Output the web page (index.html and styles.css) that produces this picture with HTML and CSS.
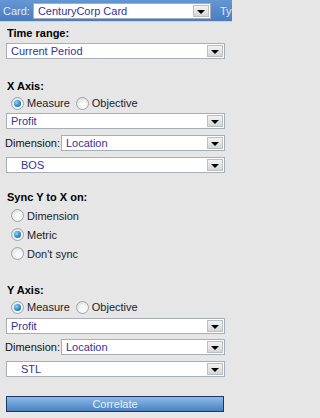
FILE: index.html
```html
<!DOCTYPE html>
<html>
<head>
<meta charset="utf-8">
<link rel="stylesheet" href="styles.css">
</head>
<body>
<div class="header">
  <span class="hlabel">Card:</span>
  <div class="select card-select"><span class="val">CenturyCorp Card</span><span class="btn"><i class="tri"></i></span></div>
  <span class="hlabel ty">Ty</span>
</div>
<div class="panel">
  <div class="label l-time">Time range:</div>
  <div class="select s-time"><span class="val">Current Period</span><span class="btn"><i class="tri"></i></span></div>

  <div class="label l-x">X Axis:</div>
  <div class="radios r-x">
    <span class="radio checked"></span><span class="rtext">Measure</span>
    <span class="radio"></span><span class="rtext">Objective</span>
  </div>
  <div class="select s-gap2"><span class="val">Profit</span><span class="btn"><i class="tri"></i></span></div>
  <div class="dimrow s-gap6">
    <span class="dimlabel">Dimension:</span>
    <div class="select grow"><span class="val">Location</span><span class="btn"><i class="tri"></i></span></div>
  </div>
  <div class="select s-gap6"><span class="val indent">BOS</span><span class="btn"><i class="tri"></i></span></div>

  <div class="label l-sync">Sync Y to X on:</div>
  <div class="syncs">
    <div class="srow"><span class="radio"></span><span class="rtext">Dimension</span></div>
    <div class="srow"><span class="radio checked"></span><span class="rtext">Metric</span></div>
    <div class="srow"><span class="radio"></span><span class="rtext">Don't sync</span></div>
  </div>

  <div class="label l-y">Y Axis:</div>
  <div class="radios r-y">
    <span class="radio checked"></span><span class="rtext">Measure</span>
    <span class="radio"></span><span class="rtext">Objective</span>
  </div>
  <div class="select s-gap3"><span class="val">Profit</span><span class="btn"><i class="tri"></i></span></div>
  <div class="dimrow s-gap5">
    <span class="dimlabel">Dimension:</span>
    <div class="select grow"><span class="val">Location</span><span class="btn"><i class="tri"></i></span></div>
  </div>
  <div class="select s-gap6"><span class="val indent">STL</span><span class="btn"><i class="tri"></i></span></div>

  <div class="button">Correlate</div>
</div>
</body>
</html>
```

FILE: styles.css
```css
html, body {
  margin: 0;
  padding: 0;
}
body {
  width: 232px;
  height: 418px;
  overflow: hidden;
  background: #e6e6e6;
  font-family: "Liberation Sans", Arial, sans-serif;
  font-size: 11px;
  color: #000;
}
.header {
  height: 22px;
  display: flex;
  align-items: center;
  background: linear-gradient(#6597d4, #4a7cc0);
  border-bottom: 1px solid #c9d3e2;
  box-sizing: border-box;
  padding-left: 3px;
  white-space: nowrap;
  overflow: hidden;
}
.hlabel {
  color: #dfe9f6;
  font-size: 11px;
  flex: none;
}
.card-select {
  width: 178px;
  margin-left: 3px;
  flex: none;
  border-color: #c2cad6;
}
.ty {
  margin-left: 9px;
}
.panel {
  display: flex;
  flex-direction: column;
  padding: 0 7px 0 6px;
}
.label {
  font-weight: bold;
  height: 14px;
  line-height: 14px;
  padding-left: 1px;
}
.l-time { margin-top: 4px; }
.l-x { margin-top: 20px; }
.l-sync { margin-top: 17px; }
.l-y { margin-top: 20px; }

.select {
  height: 16px;
  box-sizing: border-box;
  border: 1px solid #a7aeb8;
  background: #fff;
  display: flex;
  align-items: stretch;
  color: #33339a;
  font-size: 11px;
}
.select .val {
  flex: 1;
  line-height: 14px;
  padding-left: 4px;
  white-space: nowrap;
  overflow: hidden;
}
.select .val.indent {
  padding-left: 14px;
}
.select .btn {
  width: 16px;
  flex: none;
  margin: 1px;
  box-sizing: border-box;
  border: 1px solid #b9bfc6;
  background: linear-gradient(#f3f3f3, #d6d6d6);
  display: flex;
  align-items: center;
  justify-content: center;
}
.tri {
  display: block;
  width: 0;
  height: 0;
  border-left: 4px solid transparent;
  border-right: 4px solid transparent;
  border-top: 4px solid #000;
  margin-top: 2px;
}
.s-time { margin-top: 3px; }
.s-gap2 { margin-top: 2px; }
.s-gap3 { margin-top: 3px; }
.s-gap5 { margin-top: 5px; }
.s-gap6 { margin-top: 6px; }

.dimrow {
  display: flex;
  align-items: center;
  height: 16px;
}
.dimlabel {
  color: #111;
  margin-left: -1px;
  width: 56px;
  flex: none;
}
.grow {
  flex: 1;
}

.radios {
  display: flex;
  align-items: center;
  height: 16px;
  margin-top: 2px;
  padding-left: 5px;
}
.radio {
  width: 13px;
  height: 13px;
  box-sizing: border-box;
  border-radius: 50%;
  border: 1px solid #9ea3aa;
  background: radial-gradient(circle at 60% 65%, #ffffff 0%, #f4f4f4 40%, #d4d4d4 100%);
  flex: none;
  position: relative;
}
.radio.checked::after {
  content: "";
  position: absolute;
  left: 2px;
  top: 2px;
  width: 7px;
  height: 7px;
  border-radius: 50%;
  background: radial-gradient(circle at 35% 35%, #9ad6f6 0%, #3b94d4 45%, #145a96 100%);
}
.rtext {
  margin-left: 3px;
  margin-right: 6px;
  color: #1c1c2a;
}
.syncs {
  display: flex;
  flex-direction: column;
  margin-top: 2px;
}
.srow {
  height: 19px;
  display: flex;
  align-items: center;
  padding-left: 5px;
}
.button {
  margin-top: 19px;
  margin-right: 1px;
  height: 16px;
  box-sizing: border-box;
  border: 1px solid #1f3563;
  background: linear-gradient(#8dbbe8, #6a9fd6 50%, #4a7fc0);
  color: #e6eef7;
  text-align: center;
  line-height: 14px;
  font-size: 11px;
}
```
